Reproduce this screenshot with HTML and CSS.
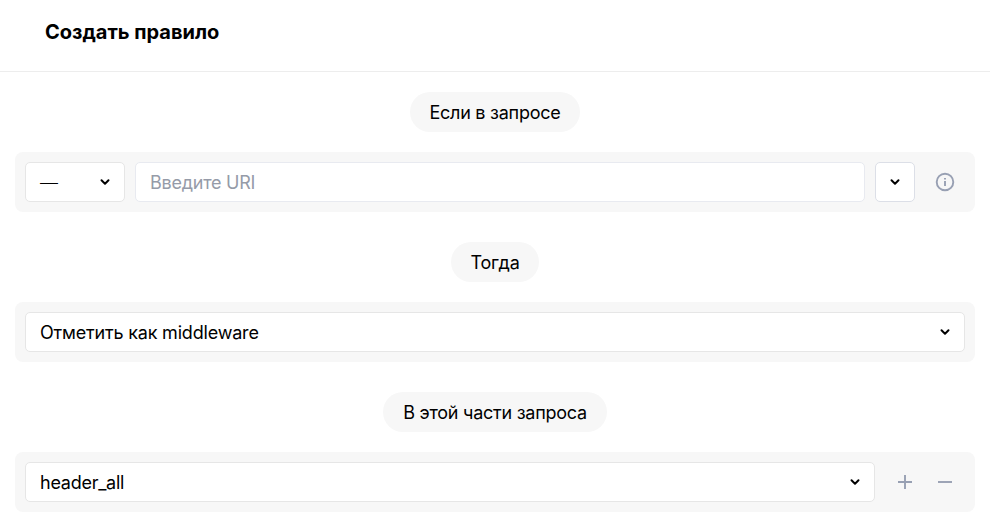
FILE: index.html
```html
<!DOCTYPE html>
<html lang="ru">
<head>
<meta charset="utf-8">
<title>Создать правило</title>
<link rel="stylesheet" href="styles.css">
</head>
<body>
<header class="header"><h1>Создать правило</h1></header>
<main class="content">
  <div class="pill pill-if">Если в запросе</div>
  <section class="row">
    <div class="field method"><span>—</span><svg class="chevron" viewBox="0 0 10 10"><path d="M1.500 3.300 5 6.700l3.500-3.400"/></svg></div>
    <div class="field grow placeholder"><span>Введите URI</span></div>
    <div class="field more"><svg class="chevron" viewBox="0 0 10 10"><path d="M1.500 3.300 5 6.700l3.500-3.400"/></svg></div>
    <div class="icon"><svg width="20" height="20" viewBox="0 0 20 20"><circle cx="10" cy="10" r="8.300"/><path d="M10 9v5M10 6v1.600"/></svg></div>
  </section>
  <div class="pill pill-then">Тогда</div>
  <section class="row">
    <div class="field select grow"><span>Отметить как middleware</span><svg class="chevron" viewBox="0 0 10 10"><path d="M1.500 3.300 5 6.700l3.500-3.400"/></svg></div>
  </section>
  <div class="pill pill-part">В этой части запроса</div>
  <section class="row last">
    <div class="field select grow"><span>header_all</span><svg class="chevron" viewBox="0 0 10 10"><path d="M1.500 3.300 5 6.700l3.500-3.400"/></svg></div>
    <div class="icon"><svg width="20" height="20" viewBox="0 0 20 20"><path d="M10 3v14M3 10h14"/></svg></div>
    <div class="icon"><svg width="20" height="20" viewBox="0 0 20 20"><path d="M3 10h14"/></svg></div>
  </section>
</main>
</body>
</html>
```
FILE: styles.css
```css
* { box-sizing: border-box; }
body { margin: 0; background: #fff; color: #000; font: 390 18px/24px Inter, sans-serif; letter-spacing: -0.25px; overflow: hidden; }
.header { height: 72px; padding: 17px 45px; border-bottom: 1px solid #ededed; }
h1 { margin: 0; font-size: 20px; line-height: 30px; font-weight: 700; letter-spacing: 0; }
.content { padding: 20px 15px 0; display: flex; flex-direction: column; align-items: center; }
.pill { height: 40px; border-radius: 20px; background: #f7f7f7; line-height: 42px; text-align: center; white-space: nowrap; }
.pill-if { width: 170px; }
.pill-then { width: 88px; }
.pill-part { width: 224px; }
.row { width: 100%; height: 60px; margin: 20px 0 30px; padding: 10px; display: flex; background: #f7f7f7; border-radius: 8px; }
.row.last { margin-bottom: 0; }
.field { height: 40px; padding: 0 14px; display: flex; align-items: center; justify-content: space-between; border: 1px solid #e8eaf0; border-radius: 5px; background: #fff; white-space: nowrap; }
.field span { padding-top: 2px; }
.select { border-color: #e6e6e6; letter-spacing: -0.19px; }
.grow { flex: 1; }
.method { width: 100px; margin-right: 10px; border-color: #e6e6e6; font-weight: 350; }
.more { width: 40px; margin: 0 10px; border-color: #dcdfe7; }
.placeholder { color: #959ba8; }
.chevron { width: 10px; height: 10px; flex: none; fill: none; stroke: #000; stroke-width: 2; stroke-linecap: round; stroke-linejoin: round; }
.icon { width: 40px; height: 40px; display: grid; place-items: center; }
.icon svg { fill: none; stroke: #98a0b3; stroke-width: 1.9; }
.row.last .grow { margin-right: 10px; letter-spacing: -0.26px; }
```
